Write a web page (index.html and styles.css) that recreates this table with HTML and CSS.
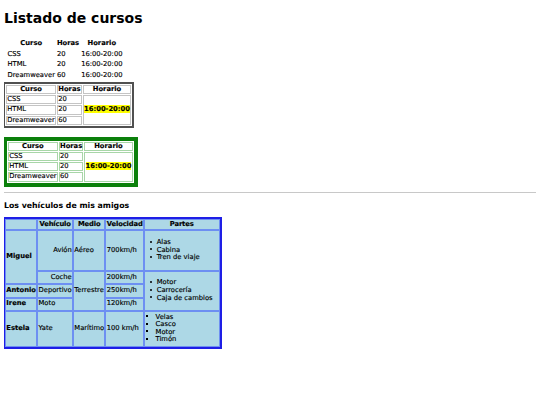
FILE: index.html
```html
<!DOCTYPE html>
<html lang="es">
<head>
<meta charset="utf-8">
<title>Listado de cursos</title>
<link rel="stylesheet" href="styles.css">
</head>
<body>
<h1>Listado de cursos</h1>

<table class="plain">
  <tr><th>Curso</th><th>Horas</th><th>Horario</th></tr>
  <tr><td>CSS</td><td>20</td><td>16:00-20:00</td></tr>
  <tr><td>HTML</td><td>20</td><td>16:00-20:00</td></tr>
  <tr><td>Dreamweaver</td><td>60</td><td>16:00-20:00</td></tr>
</table>

<table class="gray">
  <tr><th>Curso</th><th>Horas</th><th>Horario</th></tr>
  <tr><td>CSS</td><td>20</td><td rowspan="3" class="hl"><strong><mark>16:00-20:00</mark></strong></td></tr>
  <tr><td>HTML</td><td>20</td></tr>
  <tr><td>Dreamweaver</td><td>60</td></tr>
</table>

<table class="green">
  <tr><th>Curso</th><th>Horas</th><th>Horario</th></tr>
  <tr><td>CSS</td><td>20</td><td rowspan="3" class="hl"><strong><mark>16:00-20:00</mark></strong></td></tr>
  <tr><td>HTML</td><td>20</td></tr>
  <tr><td>Dreamweaver</td><td>60</td></tr>
</table>

<hr>

<h3>Los vehículos de mis amigos</h3>

<table class="cars">
  <tr class="head"><th></th><th>Vehículo</th><th class="medio">Medio</th><th>Velocidad</th><th>Partes</th></tr>
  <tr>
    <th rowspan="2" class="name">Miguel</th>
    <td class="r">Avión</td>
    <td>Aéreo</td>
    <td>700km/h</td>
    <td class="parts"><ul class="disc"><li>Alas</li><li>Cabina</li><li>Tren de viaje</li></ul></td>
  </tr>
  <tr>
    <td class="r">Coche</td>
    <td rowspan="3">Terrestre</td>
    <td>200km/h</td>
    <td rowspan="3" class="parts"><ul class="disc"><li>Motor</li><li>Carrocería</li><li>Caja de cambios</li></ul></td>
  </tr>
  <tr>
    <th class="name">Antonio</th>
    <td>Deportivo</td>
    <td>250km/h</td>
  </tr>
  <tr>
    <th class="name">Irene</th>
    <td>Moto</td>
    <td>120km/h</td>
  </tr>
  <tr>
    <th class="name">Estela</th>
    <td>Yate</td>
    <td>Marítimo</td>
    <td>100 km/h</td>
    <td class="parts"><ul class="square"><li>Velas</li><li>Casco</li><li>Motor</li><li>Timón</li></ul></td>
  </tr>
</table>
</body>
</html>
```

FILE: styles.css
```css
body {
  margin: 4px;
  font-family: "DejaVu Sans", Verdana, sans-serif;
  font-size: 6.75px;
  color: #000;
  background: #fff;
}
h1 {
  font-size: 14px;
  margin: 6px 0 12px;
}
h3 {
  font-size: 7.8px;
  margin: 8px 0 6.9px;
}
table {
  font-size: 6.75px;
  -webkit-text-stroke: 0.15px #000;
}
.plain {
  margin-left: 2px;
  border-spacing: 1px;
  line-height: 7.5px;
}
.plain th, .plain td {
  padding: 1px 0.5px;
}
.gray {
  margin-top: 0.5px;
  margin-left: -1px;
  border: 2px solid #505050;
  border-spacing: 1px;
  line-height: 7.4px;
  background: #fff;
}
.gray th, .gray td {
  border: 1px solid #c4c4c4;
  padding: 0 0.3px;
}
.green {
  margin-top: 8.4px;
  margin-left: -1px;
  border: 4px solid #0b800b;
  border-spacing: 1px;
  line-height: 7.3px;
  background: #fff;
}
.green th, .green td {
  border: 1px solid #a8d6a8;
  padding: 0 0.2px;
}
.hl {
  vertical-align: middle;
}
mark {
  background: #ffff00;
  color: #000;
}
hr {
  margin: 5.5px 0 0;
  border: 0;
  border-top: 1px solid #c8c8c8;
}
.cars {
  margin-left: -1px;
  border: 2px solid #1e1ee6;
  border-spacing: 0;
  line-height: 7.6px;
  background: #add8e6;
}
.cars th, .cars td {
  border: 1px solid #6d8ff2;
  background: #add8e6;
  padding: 1.6px 0.3px;
}
.cars .head th {
  padding: 0.8px 0.3px;
  letter-spacing: -0.12px;
}
.cars .head .medio {
  padding: 0.8px 1px;
}
.cars .r {
  text-align: right;
}
.cars .name {
  text-align: left;
}
.cars .parts {
  padding-right: 6px;
}
.disc, .square {
  list-style: none;
  margin: 0;
  padding: 0;
}
.disc {
  margin: 6.2px 0;
  padding-left: 5px;
}
.disc li::before {
  content: "";
  display: inline-block;
  width: 2px;
  height: 2px;
  border-radius: 50%;
  background: #000;
  margin-right: 4.5px;
  vertical-align: 1.5px;
}
.square {
  padding-left: 0.7px;
}
.square li::before {
  content: "";
  display: inline-block;
  width: 2.2px;
  height: 2.2px;
  background: #000;
  margin-right: 7.5px;
  vertical-align: 1.4px;
}
```
